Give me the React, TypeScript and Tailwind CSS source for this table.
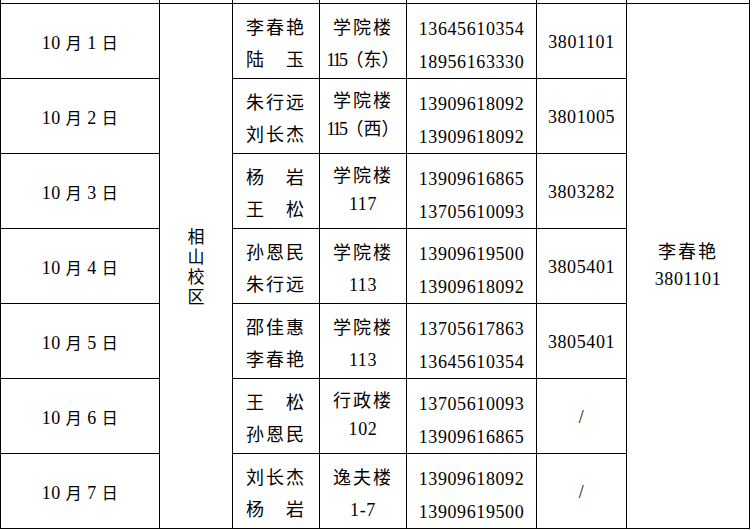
const ROWS = [
  { day: 1, names: ['李春艳', '陆　玉'], place: ['学院楼', '115（东）'], phones: ['13645610354', '18956163330'], office: '3801101' },
  { day: 2, names: ['朱行远', '刘长杰'], place: ['学院楼', '115（西）'], phones: ['13909618092', '13909618092'], office: '3801005', tight: true },
  { day: 3, names: ['杨　岩', '王　松'], place: ['学院楼', '117'], phones: ['13909616865', '13705610093'], office: '3803282', tight: true },
  { day: 4, names: ['孙恩民', '朱行远'], place: ['学院楼', '113'], phones: ['13909619500', '13909618092'], office: '3805401' },
  { day: 5, names: ['邵佳惠', '李春艳'], place: ['学院楼', '113'], phones: ['13705617863', '13645610354'], office: '3805401' },
  { day: 6, names: ['王　松', '孙恩民'], place: ['行政楼', '102'], phones: ['13705610093', '13909616865'], office: '/', tight: true },
  { day: 7, names: ['刘长杰', '杨　岩'], place: ['逸夫楼', '1-7'], phones: ['13909618092', '13909619500'], office: '/' },
];

// 115（东） has squeezed digits, the rest of the numbers are spaced out
function Place({ text }: { text: string }) {
  const m = text.match(/^(\d+)(（.+）)$/);
  if (m) {
    return (
      <span>
        <span className="tracking-[-2.5px]">{m[1]}</span>
        <span>{m[2]}</span>
      </span>
    );
  }
  if (/^[\d-]+$/.test(text)) return <span className="tracking-[0.6px]">{text}</span>;
  return <span className="tracking-[2px]">{text}</span>;
}

export default function App() {
  return (
    <div className="h-[530px] w-[752px] bg-white font-['Liberation_Serif','Noto_Sans_CJK_SC',serif] text-[18px] text-black">
      <div className="grid w-[750px] grid-cols-[158px_72px_86px_86px_129px_89px_122px] grid-rows-[3px_repeat(7,74px)] gap-px bg-black px-px pb-px">
        {Array.from({ length: 7 }).map((_, i) => (
          <div key={i} className="bg-white" />
        ))}

        <div className="col-start-2 row-span-7 row-start-2 flex flex-col items-center justify-center bg-white pt-[3px] text-[17px] leading-[20px]">
          {['相', '山', '校', '区'].map((c) => (
            <span key={c}>{c}</span>
          ))}
        </div>

        <div className="col-start-7 row-span-7 row-start-2 flex flex-col items-center justify-center bg-white leading-[27px]">
          <span className="tracking-[2px]">李春艳</span>
          <span className="tracking-[0.6px]">3801101</span>
        </div>

        {ROWS.map((r) => (
          <Row key={r.day} r={r} />
        ))}
      </div>
    </div>
  );
}

function Row({ r }: { r: (typeof ROWS)[number] }) {
  const rowStart = ['row-start-2', 'row-start-3', 'row-start-4', 'row-start-5', 'row-start-6', 'row-start-7', 'row-start-8'][r.day - 1];
  return (
    <>
      <div className={`${rowStart} col-start-1 flex items-center justify-center bg-white pt-[4px]`}>
        <span className="tracking-[0.5px]">
          10 <span className="text-[16px]">月</span> {r.day} <span className="text-[16px]">日</span>
        </span>
      </div>
      <div className={`${rowStart} col-start-3 flex flex-col items-center bg-white pt-[8px] leading-[32px] tracking-[2px]`}>
        <span>{r.names[0]}</span>
        <span>{r.names[1]}</span>
      </div>
      <div
        className={`${rowStart} col-start-4 flex flex-col items-center bg-white pt-[8px] ${r.tight ? 'leading-[28px]' : 'leading-[32px]'}`}
      >
        <Place text={r.place[0]} />
        <Place text={r.place[1]} />
      </div>
      <div className={`${rowStart} col-start-5 flex flex-col items-center bg-white pt-[9px] leading-[33px] tracking-[0.6px]`}>
        <span>{r.phones[0]}</span>
        <span>{r.phones[1]}</span>
      </div>
      <div className={`${rowStart} col-start-6 flex items-center justify-center bg-white pt-[3px] tracking-[0.6px]`}>
        {r.office}
      </div>
    </>
  );
}
